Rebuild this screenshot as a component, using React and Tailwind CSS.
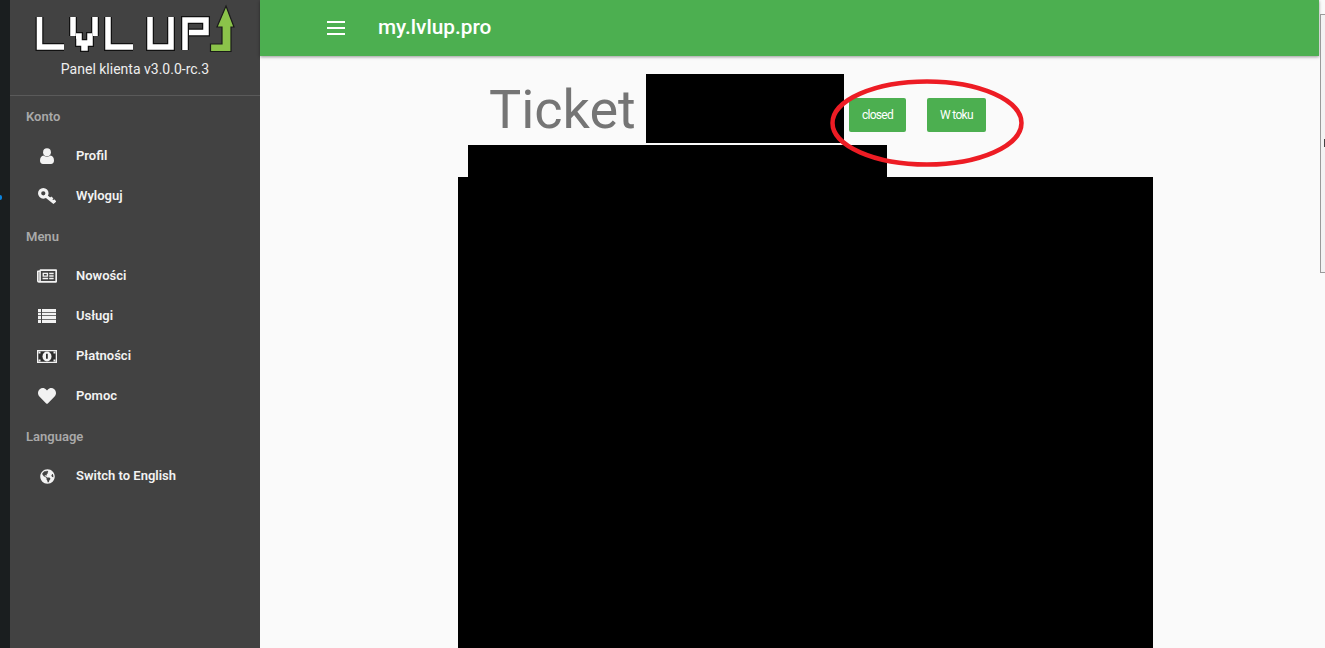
import React from "react";
import { FaRegNewspaper, FaHeart, FaGlobeAmericas } from "react-icons/fa";

const LOGO = [
  "M39.5 17V47H64",
  "M73 17V36M76 36H79V43H84V48H85V43H90V36H92M95 17V36",
  "M108 17V47H133",
  "M150 17V47H171V17",
  "M185 50V20H206V32.5H189",
];

const Logo = () => (
  <svg width="212" height="56" viewBox="30 0 212 56" className="block">
    <g fill="none">
      {LOGO.map((d) => <path key={d} d={d} stroke="#111" strokeWidth="8" />)}
      {LOGO.map((d) => <path key={d + "w"} d={d} stroke="#fff" strokeWidth="5.5" />)}
    </g>
    <path d="M226 6L234 27H231V51.500H210.500V44H222V27H217Z" fill="#8bc34a" stroke="#1a1a1a" strokeWidth="1.2" />
  </svg>
);

const UserIcon = () => (
  <svg width="14" height="16" viewBox="0 0 14 16">
    <circle cx="7" cy="4.200" r="3.900" fill="currentColor" />
    <path d="M0 12.500C0 9.500 1.500 7.800 3.500 7.500C5 8.800 9 8.800 10.500 7.500C12.500 7.800 14 9.500 14 12.500C14 14.800 12.800 16 11 16H3C1.200 16 0 14.800 0 12.500Z" fill="currentColor" />
  </svg>
);

const KeyIcon = () => (
  <svg width="18" height="16" viewBox="0 0 17 15">
    <circle cx="5" cy="5" r="3.500" fill="none" stroke="currentColor" strokeWidth="3" />
    <path d="M7.500 7.500L15.500 14M11.500 11L13.500 8.800M14.500 13.500L16.300 11.500" fill="none" stroke="currentColor" strokeWidth="2.800" />
  </svg>
);

const ListIcon = () => (
  <svg width="18" height="14" viewBox="0 0 18 14">
    <path d="M0 0H3V3H0ZM0 3.700H3V6.300H0ZM0 7H3V10H0ZM0 10.700H3V14H0ZM4 0H18V3H4ZM4 3.700H18V6.300H4ZM4 7H18V10H4ZM4 10.700H18V14H4Z" fill="currentColor" />
  </svg>
);

const MoneyIcon = () => (
  <svg width="20" height="13" viewBox="0 0 20 13">
    <path fillRule="evenodd" d="M0 0H20V13H0ZM1.500 1.500V11.500H18.500V1.500Z" fill="currentColor" />
    <path d="M1.500 1.500H18.500V11.500H1.500Z" fill="#2c2c2c" />
    <ellipse cx="10" cy="6.500" rx="4.500" ry="5" fill="currentColor" />
    <path d="M9 3.800H10.800V8.800H9Z" fill="#2c2c2c" />
    <path d="M1.500 1.500H3.500V3.500H1.500ZM16.500 1.500H18.500V3.500H16.500ZM1.500 9.500H3.500V11.500H1.500ZM16.500 9.500H18.500V11.500H16.500Z" fill="currentColor" />
  </svg>
);

const Label = ({ children }) => (
  <div className="h-10 pl-4 pt-[2px] flex items-center text-[13px] font-semibold text-[#a9a9a9]">{children}</div>
);

const Item = ({ icon, children }) => (
  <div className="h-10 flex items-center text-[13px] font-semibold text-[#f2f2f2]">
    <span className="w-[66px] pl-[8px] flex justify-center shrink-0">{icon}</span>
    <span>{children}</span>
  </div>
);

export default function App() {
  return (
    <div className="relative flex h-[648px] w-[1325px] overflow-hidden bg-[#fafafa] font-['Roboto',sans-serif]">
      <div className="relative w-[10px] shrink-0 bg-[#1a1e1f]">
        <span className="absolute left-[-2px] top-[195px] h-[5px] w-[4px] rounded-full bg-[#0a84e0]" />
      </div>

      <aside className="w-[250px] shrink-0 bg-[#424242]">
        <div className="h-[96px] border-b border-[#5a5a5a] flex flex-col">
          <div className="ml-[20px]"><Logo /></div>
          <div className="mt-[3px] text-center text-sm text-[#eeeeee]">Panel klienta v3.0.0-rc.3</div>
        </div>
        <Label>Konto</Label>
        <Item icon={<UserIcon />}>Profil</Item>
        <Item icon={<KeyIcon />}>Wyloguj</Item>
        <Label>Menu</Label>
        <Item icon={<FaRegNewspaper size={20} />}>Nowości</Item>
        <Item icon={<ListIcon />}>Usługi</Item>
        <Item icon={<MoneyIcon />}>Płatności</Item>
        <Item icon={<FaHeart size={18} />}>Pomoc</Item>
        <Label>Language</Label>
        <Item icon={<FaGlobeAmericas size={15} />}>Switch to English</Item>
      </aside>

      <main className="flex min-w-0 flex-1 flex-col">
        <header className="h-14 shrink-0 bg-[#4caf50] shadow-[0_1px_3px_rgba(0,0,0,0.4)] flex items-center pl-[67px] text-white">
          <svg width="18" height="14" viewBox="0 0 18 14" className="block">
            <path d="M0 1H18M0 7H18M0 13H18" stroke="#fff" strokeWidth="2" />
          </svg>
          <span className="ml-[33px] text-[20.8px] font-medium">my.lvlup.pro</span>
        </header>

        <div className="ml-[229px] mt-[18px] flex h-[69px] items-start">
          <h1 className="mt-[2px] w-[157px] text-[54px] font-normal leading-[68px] text-[#757575]">Ticket</h1>
          <div className="h-[69px] w-[198px] bg-black" />
          <button className="ml-[5px] mt-[24px] h-[34px] w-[57px] rounded-[2px] bg-[#4caf50] text-xs tracking-[-0.7px] text-white">closed</button>
          <button className="ml-[21px] mt-[24px] h-[34px] w-[59px] rounded-[2px] bg-[#4caf50] text-xs tracking-[-0.7px] text-white">W toku</button>
        </div>
        <div className="ml-[208px] mt-[2px] h-[32px] w-[419px] shrink-0 bg-black" />
        <div className="ml-[198px] w-[695px] flex-1 bg-black" />
      </main>

      <div className="relative w-[6px] shrink-0">
        <div className="ml-[1px] mt-[14px] h-[259px] border-y border-l border-[#9a9a9a] bg-[#f3f3f3]" />
        <div className="absolute left-[5px] top-[139px] h-[8px] w-[1px] bg-[#444]" />
      </div>

      <svg className="absolute left-[830px] top-[79px]" width="196" height="90" viewBox="0 0 196 90">
        <ellipse cx="97" cy="44" rx="94.500" ry="41.500" fill="none" stroke="#ed1c24" strokeWidth="4.500" />
      </svg>
    </div>
  );
}
